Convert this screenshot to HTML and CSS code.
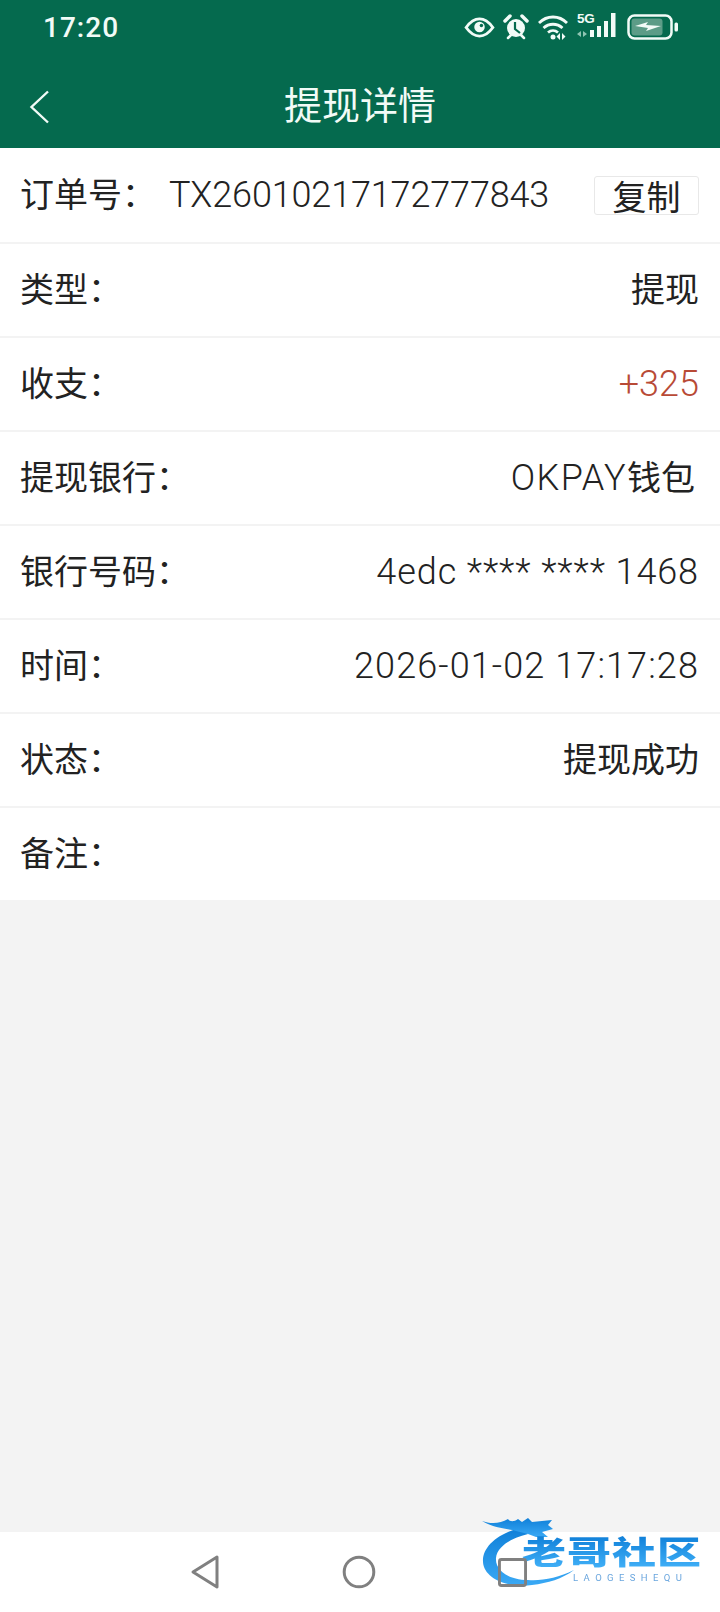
FILE: index.html
```html
<!DOCTYPE html>
<html lang="zh-CN">
<head>
<meta charset="utf-8">
<title>提现详情</title>
<link rel="stylesheet" href="styles.css">
</head>
<body>
<div class="page">
  <header class="top">
    <div class="status">
      <span class="clock">17:20</span>
      <div class="status-icons">
        <svg viewBox="0 0 32 22" width="31" height="21"><path d="M2 11C7 4 11 2 16 2s9 2 14 9c-5 7-9 9-14 9S7 18 2 11z" fill="none" stroke="#f2fbf7" stroke-width="3"/><circle cx="16" cy="10.500" r="5.500" fill="#f2fbf7"/><circle cx="18" cy="9" r="1.800" fill="#056a4e"/></svg>
        <svg viewBox="0 0 26 26" width="26" height="26"><circle cx="13" cy="14" r="9" fill="#f2fbf7"/><path d="M2 7l5-5M24 7l-5-5" stroke="#f2fbf7" stroke-width="3.500" stroke-linecap="round"/><path d="M5 24l3-3M21 24l-3-3" stroke="#f2fbf7" stroke-width="2.500" stroke-linecap="round"/><path d="M12 8v7l5 4" fill="none" stroke="#056a4e" stroke-width="2.200"/></svg>
        <svg viewBox="0 0 32 26" width="32" height="26"><path d="M2 9c8-8 20-8 28 0M6.500 14c5.500-5 13.500-5 19 0M11 18.500c3-2.500 7-2.500 10 0" fill="none" stroke="#f2fbf7" stroke-width="2.800"/><circle cx="16" cy="23" r="2.500" fill="#f2fbf7"/><path d="M23 19v7l-3.500-3.500zM25 19v7l3.500-3.500z" fill="#f2fbf7"/></svg>
        <div class="signal">
          <span class="five-g">5G</span>
          <svg viewBox="0 0 42 26" width="42" height="26"><path d="M4 19v6l-4-3zM6 19v6l4-3z" fill="#8fc4b2"/><path d="M13 18h4v7h-4zM20 14h4v11h-4zM27 9h4v16h-4zM34 1h4.500v24H34z" fill="#f2fbf7"/></svg>
        </div>
        <svg viewBox="0 0 52 26" width="52" height="26"><rect x="1.500" y="1.500" width="43" height="23" rx="6" fill="none" stroke="#f2fbf7" stroke-width="2.500"/><rect x="4.500" y="4.500" width="31" height="17" rx="3" fill="#5c9c87"/><path d="M8 12l13-4-2 3 15 1-15 5 2-3z" fill="#f2fbf7"/><rect x="47.500" y="8.500" width="3.500" height="9" rx="1.500" fill="#f2fbf7"/></svg>
      </div>
    </div>
    <div class="bar">
      <svg class="back" viewBox="0 0 20 34" width="20" height="34"><path d="M19 1.500L2.500 17 19 32.500" fill="none" stroke="#f2fbf7" stroke-width="2.400"/></svg>
      <h1 class="title">提现详情</h1>
    </div>
  </header>

  <main class="list">
    <div class="row">
      <span class="label">订单号：</span>
      <span class="order">TX26010217172777843</span>
      <div class="copy">复制</div>
    </div>
    <div class="row"><span class="label">类型：</span><span class="value">提现</span></div>
    <div class="row"><span class="label">收支：</span><span class="value income">+325</span></div>
    <div class="row"><span class="label">提现银行：</span><span class="value wallet"><span class="okpay">OKPAY</span>钱包</span></div>
    <div class="row"><span class="label">银行号码：</span><span class="value latin">4edc **** **** 1468</span></div>
    <div class="row"><span class="label">时间：</span><span class="value latin wide">2026-01-02 17:17:28</span></div>
    <div class="row"><span class="label">状态：</span><span class="value">提现成功</span></div>
    <div class="row"><span class="label">备注：</span></div>
  </main>

  <div class="fill"></div>

  <nav class="nav">
    <svg viewBox="0 0 30 36" width="30" height="36"><path d="M27 3L3 18l24 15z" fill="none" stroke="#808080" stroke-width="3" stroke-linejoin="round"/></svg>
    <svg viewBox="0 0 34 34" width="34" height="34"><circle cx="17" cy="17" r="14.800" fill="none" stroke="#808080" stroke-width="3"/></svg>
    <svg class="recents" viewBox="0 0 30 30" width="29" height="29"><rect x="1.500" y="1.500" width="27" height="27" rx="2" fill="none" stroke="#808080" stroke-width="3"/></svg>
  </nav>

  <div class="mark">
    <svg class="dragon" viewBox="0 0 100 80" width="100" height="80"><defs><linearGradient id="dg" x1="0" y1="0" x2="0" y2="1"><stop offset="0" stop-color="#0f7fd8"/><stop offset="1" stop-color="#3aa9f5"/></linearGradient></defs><path d="M38 12C14 18 0 32 1 46c1 16 23 26 49 23 16-2 30-6 42-15-16 8-32 11-46 10C26 64 13 54 14 42c1-12 16-20 32-24z" fill="url(#dg)"/><path d="M0 5c8 3 18 3 26-2 2 3 6 3 10 0l4 3 6-4 4 4 20-2-4 5 5 4-11 3 6 5H54l-8-3-16-4C18 12 8 10 0 5z" fill="url(#dg)"/></svg>
    <span class="mark-cn">老哥社区</span>
    <span class="mark-en">LAOGESHEQU</span>
  </div>
</div>
</body>
</html>
```

FILE: styles.css
```css
* { box-sizing: border-box; margin: 0; padding: 0; }
html, body { height: 100%; }
body {
  width: 720px;
  background: #f3f3f3;
  font-family: Roboto, "Noto Sans CJK SC", sans-serif;
  color: #222;
}
.page { position: relative; display: flex; flex-direction: column; height: 1612px; overflow: hidden; }

.top { background: #056a4e; height: 148px; color: #f2fbf7; flex: none; }
.status { display: flex; align-items: center; justify-content: space-between; height: 54px; padding: 0 41px 0 43px; }
.clock { font-size: 28px; font-weight: 500; letter-spacing: 1px; }
.status-icons { display: flex; align-items: center; gap: 8px; }
.signal { position: relative; }
.five-g { position: absolute; left: 0; top: 0; font-size: 13.500px; font-weight: 700; line-height: 14px; letter-spacing: -0.300px; font-family: "Liberation Sans", sans-serif; }

.bar { position: relative; height: 94px; display: flex; align-items: center; justify-content: center; padding-top: 10px; }
.back { position: absolute; left: 29px; top: 36px; }
.title { font-size: 38px; font-weight: 400; line-height: 50px; }

.list { background: #fff; flex: none; }
.row {
  height: 94px;
  display: flex;
  align-items: center;
  padding: 0 21px 0 20px;
  font-size: 34px;
  line-height: 46px;
  border-top: 2px solid #f3f3f3;
}
.row:first-child { border-top: 0; }
.label { flex: none; }
.value { margin-left: auto; white-space: nowrap; }
.order { margin-left: 13px; white-space: nowrap; font-size: 36px; font-weight: 300; letter-spacing: -0.150px; }
.latin { font-size: 36px; font-weight: 300; letter-spacing: 0.900px; }
.wide { letter-spacing: 1.100px; }
.okpay { font-size: 36px; font-weight: 300; letter-spacing: 1.400px; }
.wallet { padding-right: 4px; }
.income { color: #b84a36; font-size: 36px; font-weight: 300; }
.copy {
  margin-left: auto;
  flex: none;
  width: 105px;
  height: 39px;
  background: #fff;
  border: 1px solid #e8e8e8;
  border-radius: 3px;
  line-height: 43px;
  text-align: center;
}

.fill { flex: 1; }
.nav {
  flex: none;
  height: 80px;
  background: #fff;
  display: flex;
  align-items: center;
  justify-content: center;
  gap: 122px;
  padding-right: 4px;
}
.recents { position: relative; z-index: 2; }

.mark { position: absolute; z-index: 1; left: 482px; top: 1516px; width: 226px; height: 84px; color: #1c8ee8; filter: blur(0.5px); }
.dragon { position: absolute; left: 0; top: 0; }
.mark-cn { position: absolute; left: 40px; top: 12px; font-size: 44px; font-weight: 900; line-height: 50px; letter-spacing: 1px; white-space: nowrap; transform: scaleY(0.72); background: linear-gradient(#0f7fd8, #45b4fa); -webkit-background-clip: text; background-clip: text; color: transparent; }
.mark-en { position: absolute; left: 91px; top: 56px; font-size: 9.500px; line-height: 12px; letter-spacing: 5.400px; color: #6aa6de; white-space: nowrap; }
```
